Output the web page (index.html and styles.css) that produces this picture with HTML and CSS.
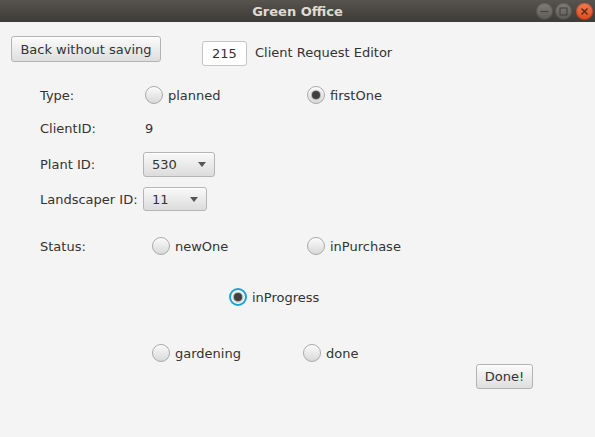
FILE: index.html
```html
<!DOCTYPE html>
<html>
<head>
<meta charset="utf-8">
<link rel="stylesheet" href="styles.css">
</head>
<body>
<div class="titlebar">
  <span class="title">Green Office</span>
  <div class="controls">
    <span class="wbtn"><svg width="17" height="17" viewBox="0 0 17 17"><line x1="4.5" y1="8.5" x2="12.5" y2="8.5" stroke="#45433f" stroke-width="1.2"/></svg></span>
    <span class="wbtn"><svg width="17" height="17" viewBox="0 0 17 17"><rect x="5" y="5" width="7" height="7" fill="none" stroke="#45433f" stroke-width="1.1"/></svg></span>
    <span class="wbtn close"><svg width="17" height="17" viewBox="0 0 17 17"><path d="M5.5 5.5 L11.5 11.5 M11.5 5.5 L5.5 11.5" stroke="#4a2a1c" stroke-width="1.3"/></svg></span>
  </div>
</div>
<main class="form">
  <div class="row header">
    <span class="btn back">Back without saving</span>
    <span class="field">215</span>
    <span class="heading">Client Request Editor</span>
  </div>
  <div class="row radios type-row">
    <span class="label w-type">Type:</span>
    <span class="radio w-planned"><span class="circle"></span>planned</span>
    <span class="radio"><span class="circle on"></span>firstOne</span>
  </div>
  <div class="row client-row">
    <span class="label w-client">ClientID:</span>
    <span>9</span>
  </div>
  <div class="row plant-row">
    <span class="label w-id">Plant ID:</span>
    <span class="combo w-530"><span>530</span><span class="arrow"></span></span>
  </div>
  <div class="row land-row">
    <span class="label w-id">Landscaper ID:</span>
    <span class="combo w-11"><span>11</span><span class="arrow"></span></span>
  </div>
  <div class="row radios status-row">
    <span class="label w-status">Status:</span>
    <span class="radio w-new"><span class="circle"></span>newOne</span>
    <span class="radio"><span class="circle"></span>inPurchase</span>
  </div>
  <div class="row radios progress-row">
    <span class="radio"><span class="circle on focus"></span>inProgress</span>
  </div>
  <div class="row radios garden-row">
    <span class="radio w-garden"><span class="circle"></span>gardening</span>
    <span class="radio"><span class="circle"></span>done</span>
  </div>
  <div class="row done-row">
    <span class="btn done">Done!</span>
  </div>
</main>
</body>
</html>
```
FILE: styles.css
```css
html, body {
  margin: 0;
  padding: 0;
}
body {
  width: 595px;
  height: 437px;
  overflow: hidden;
  background: #f4f4f4;
  font-family: "DejaVu Sans", sans-serif;
  font-size: 13px;
  line-height: 15px;
  color: #333333;
}

/* title bar */
.titlebar {
  height: 22px;
  display: grid;
  grid-template-columns: 1fr auto 1fr;
  align-items: center;
  background: linear-gradient(#57534e, #3c3b37);
}
.title {
  grid-column: 2;
  font-weight: bold;
  font-size: 13px;
  color: #dfdbd2;
}
.controls {
  grid-column: 3;
  justify-self: end;
  display: flex;
  gap: 2px;
  padding-right: 2px;
}
.wbtn {
  width: 17px;
  height: 17px;
  border-radius: 50%;
  display: flex;
  background: linear-gradient(#807d78, #5c5a56);
  box-shadow: inset 0 0 0 1px rgba(0, 0, 0, 0.2);
}
.wbtn.close {
  margin-left: 2px;
  background: linear-gradient(#f37a4f, #e04a1d);
}

/* form */
.row {
  display: flex;
  align-items: center;
}
.header {
  align-items: flex-start;
  margin-top: 14px;
  height: 30px;
  padding-left: 11px;
}
.btn {
  box-sizing: border-box;
  height: 26px;
  border: 1px solid #b3b3b3;
  border-radius: 3px;
  background: linear-gradient(#fbfbfb, #dedede);
  box-shadow: inset 0 1px 0 #ffffff;
  display: inline-flex;
  align-items: center;
  justify-content: center;
  color: #333333;
}
.back {
  width: 150px;
}
.field {
  box-sizing: border-box;
  margin-left: 41px;
  margin-top: 5px;
  width: 45px;
  height: 25px;
  border: 1px solid #c4c4c4;
  border-radius: 3px;
  background: #ffffff;
  display: inline-flex;
  align-items: center;
  justify-content: center;
}
.heading {
  margin-left: 8px;
  margin-top: 9px;
}

.label {
  flex: none;
}
.w-type { width: 105px; }
.w-client { width: 105px; }
.w-id { width: 103px; }
.w-status { width: 112px; }

.radios {
  height: 18px;
}
.type-row {
  margin-top: 20px;
  padding-left: 40px;
}
.client-row {
  margin-top: 17px;
  height: 15px;
  padding-left: 40px;
}
.plant-row {
  margin-top: 16px;
  height: 25px;
  padding-left: 40px;
}
.land-row {
  margin-top: 10px;
  height: 24px;
  padding-left: 40px;
}
.status-row {
  margin-top: 26px;
  padding-left: 40px;
}
.progress-row {
  margin-top: 33px;
  padding-left: 229px;
}
.garden-row {
  margin-top: 38px;
  padding-left: 152px;
}
.done-row {
  margin-top: 2px;
  justify-content: flex-end;
  padding-right: 62px;
}
.done {
  width: 57px;
  height: 25px;
}

.radio {
  display: inline-flex;
  align-items: center;
  gap: 5px;
}
.w-planned { width: 162px; }
.w-new { width: 155px; }
.w-garden { width: 151px; }
.circle {
  box-sizing: border-box;
  flex: none;
  width: 18px;
  height: 18px;
  border-radius: 50%;
  border: 1px solid #a8a8a8;
  background: linear-gradient(#fafafa, #d9d9d9);
  box-shadow: inset 0 1px 0 #ffffff;
  display: flex;
  align-items: center;
  justify-content: center;
}
.circle.on::after {
  content: "";
  width: 8px;
  height: 8px;
  border-radius: 50%;
  background: #3f3f3f;
  box-shadow: 0 0 1px 1px rgba(60, 60, 60, 0.35);
}
.circle.focus {
  border: 2px solid #1ba3d8;
  box-shadow: inset 0 0 0 1px #ffffff;
}

.combo {
  box-sizing: border-box;
  height: 100%;
  border: 1px solid #b5b5b5;
  border-radius: 3px;
  background: linear-gradient(#f9f9f9, #dcdcdc);
  box-shadow: inset 0 1px 0 #ffffff;
  display: inline-flex;
  align-items: center;
  justify-content: space-between;
  padding: 0 8px 0 8px;
}
.w-530 { width: 72px; }
.w-11 { width: 64px; }
.arrow {
  width: 0;
  height: 0;
  border-left: 4px solid transparent;
  border-right: 4px solid transparent;
  border-top: 5px solid #555555;
}
```
